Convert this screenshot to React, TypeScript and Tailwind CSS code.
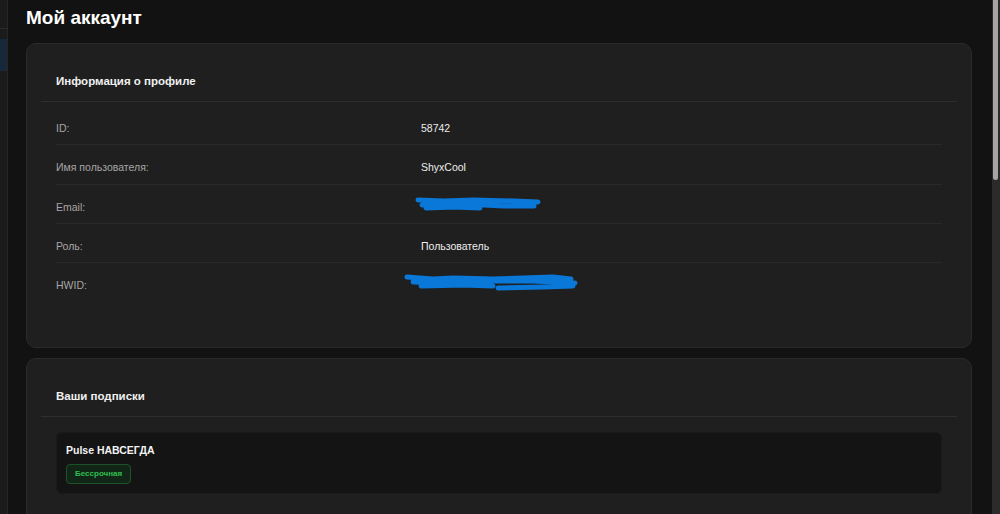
import React from "react";

const font = { fontFamily: '"Liberation Sans", Arial, sans-serif' };

function Scribble({ w, h, d }: { w: number; h: number; d: string }) {
  return (
    <svg width={w} height={h} viewBox={`0 0 ${w} ${h}`} className="block">
      <path d={d} fill="none" stroke="#0a78d8" strokeWidth="5" strokeLinecap="round" strokeLinejoin="round" />
    </svg>
  );
}

const rows: { label: string; value?: string; scribble?: "email" | "hwid" }[] = [
  { label: "ID:", value: "58742" },
  { label: "Имя пользователя:", value: "ShyxCool" },
  { label: "Email:", scribble: "email" },
  { label: "Роль:", value: "Пользователь" },
  { label: "HWID:", scribble: "hwid" },
];

function Card({ title, children, className = "" }: { title: string; children: React.ReactNode; className?: string }) {
  return (
    <div className={`rounded-[10px] border border-[#2a2a2a] bg-[#1f1f1f] p-[14px] ${className}`}>
      <div className="h-[44px] border-b border-[#2e2e2e] px-[15px] pt-[15px]">
        <h2 className="text-[11.5px] font-bold leading-4 text-[#f0f0f0]">{title}</h2>
      </div>
      {children}
    </div>
  );
}

export default function App() {
  return (
    <div className="flex h-[514px] w-[1000px] overflow-hidden bg-[#121212]" style={font}>
      {/* sidebar edge */}
      <div className="flex w-[8px] shrink-0 flex-col border-r border-[#262626] bg-[#1b1b1b]">
        <div className="h-[29px] border-b border-[#2a2a2a]" />
        <div className="mt-[10px] h-[32px] bg-[#17283a]" />
      </div>

      <main className="flex-1 pl-[18px] pr-5">
        <h1 className="pt-[6px] text-[19px] font-bold leading-6 text-white">Мой аккаунт</h1>

        <Card title="Информация о профиле" className="mt-[13px]">
          <div className="px-[15px] pb-[30px] pt-[4px]">
            {rows.map((r, i) => (
              <div
                key={r.label}
                className={`flex h-[39.33px] pt-[14px] text-[10.5px] leading-4 ${i < rows.length - 1 ? "border-b border-[#292929]" : ""}`}
              >
                <div className="w-[365px] shrink-0 text-[#a6a6a6]">{r.label}</div>
                {r.value && <div className="text-[#ededed]">{r.value}</div>}
                {r.scribble === "email" && (
                  <div className="-ml-[7px] mt-[-3px]">
                    <Scribble w={130} h={16} d="M4 4 L30 5 L60 4 L100 5 L124 6 M8 9 L50 8 L90 10 L120 10 M12 12 L40 11 L66 12" />
                  </div>
                )}
                {r.scribble === "hwid" && (
                  <div className="-ml-[18px] mt-[-4px]">
                    <Scribble w={178} h={20} d="M4 4 L30 6 L50 5 L90 6 L120 5 L150 4 L168 6 M10 9 L40 10 L80 8 L130 8 L172 10 M18 13 L60 12 L90 13 M95 15 L140 14 L170 13" />
                  </div>
                )}
              </div>
            ))}
          </div>
        </Card>

        <Card title="Ваши подписки" className="mt-[10px]">
          <div className="px-[15px] pt-[15px]">
            <div className="rounded-[6px] border border-[#1a1a1a] bg-[#141414] px-[9px] pb-[9px] pt-[9px]">
              <div className="text-[10.5px] font-bold leading-4 text-[#f2f2f2]">Pulse НАВСЕГДА</div>
              <span className="mt-[6px] inline-flex h-[20px] items-center rounded-[4px] border border-[#1f5129] bg-[#112617] px-[8px] text-[8px] font-bold text-[#2fbf4f]">
                Бессрочная
              </span>
            </div>
          </div>
          <div className="h-[40px]" />
        </Card>
      </main>

      {/* scrollbar */}
      <div className="w-[8px] shrink-0 bg-[#2b2b2b] pl-px pr-[2px]">
        <div className="h-[180px] rounded-b-[3px] bg-[#a5a5a5]" />
      </div>
    </div>
  );
}
